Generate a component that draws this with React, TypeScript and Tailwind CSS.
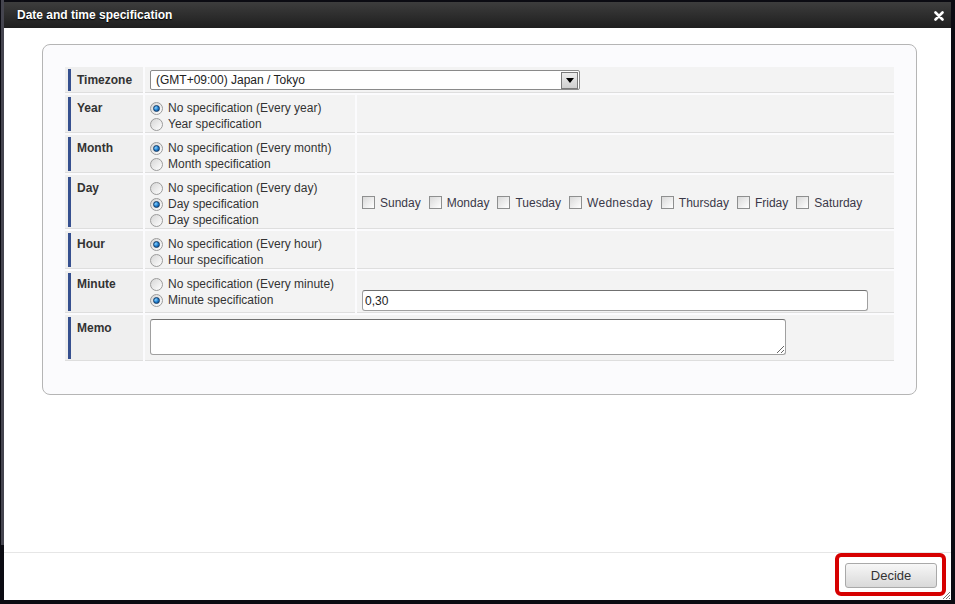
import React from 'react';

// ─── Small form primitives drawn to look like the classic browser widgets ────

const Radio: React.FC<{ checked?: boolean }> = ({ checked }) => (
  <span className="w-[13px] h-[13px] rounded-full border border-[#9b9b9b] bg-linear-to-br from-[#d6d6d6] to-white flex items-center justify-center shrink-0">
    {checked && (
      <span className="w-[7px] h-[7px] rounded-full bg-radial-[at_35%_35%] from-[#8fd4ff] via-[#1e7fd0] to-[#0b3e7a] border border-[#123a66]" />
    )}
  </span>
);

const Check: React.FC = () => (
  <span className="w-[13px] h-[13px] border border-[#8e8f8f] bg-linear-to-br from-[#d9d9d9] to-white shrink-0" />
);

const RadioLine: React.FC<{ label: string; checked?: boolean }> = ({ label, checked }) => (
  <div className="flex items-center h-[16px] gap-[5px]">
    <Radio checked={checked} />
    <span>{label}</span>
  </div>
);

const Label: React.FC<{ text: string }> = ({ text }) => (
  <div className="bg-[#efefef] border-b border-[#dedede] pt-[2px] pb-[1px] pl-[3px]">
    <div className="h-full border-l-[3px] border-[#36508f] pl-[6px] pt-[3px] leading-[16px] font-bold text-[#333]">
      {text}
    </div>
  </div>
);

const Cell: React.FC<{ className?: string; children?: React.ReactNode }> = ({ className = '', children }) => (
  <div className={`bg-[#f3f3f3] border-b border-[#dedede] ${className}`}>{children}</div>
);

// Wednesday renders a little wider in the original
const DAYS: { name: string; cls: string }[] = [
  { name: 'Sunday', cls: '' },
  { name: 'Monday', cls: '' },
  { name: 'Tuesday', cls: '' },
  { name: 'Wednesday', cls: 'tracking-[0.3px]' },
  { name: 'Thursday', cls: '' },
  { name: 'Friday', cls: '' },
  { name: 'Saturday', cls: '' },
];

export default function App() {
  return (
    <div className="w-[955px] h-[604px] bg-[#0b0b12] flex overflow-hidden font-['Liberation_Sans',Arial,sans-serif] text-[12px] text-[#333]">
      {/* left edge of the page behind */}
      <div className="w-[4px] pl-[1px] shrink-0">
        <div className="h-[545px] bg-[#45454f]" />
      </div>

      {/* Dialog */}
      <div className="w-[947px] mt-[2px] mb-[4px] flex flex-col">
        {/* Title bar */}
        <div className="h-[26px] shrink-0 bg-linear-to-b from-[#3d3d3d] to-[#1f1f1f] flex items-center justify-between pl-[13px] pr-[7px]">
          <span className="text-white font-bold text-[12px] [text-shadow:0_1px_1px_#000]">Date and time specification</span>
          <svg width="10" height="10" viewBox="0 0 10 10" className="mt-[1px]">
            <path d="M1.5 1.5 L8.5 8.5 M8.5 1.5 L1.5 8.5" stroke="#fff" strokeWidth="2.6" strokeLinecap="round" />
          </svg>
        </div>

        {/* Body */}
        <div className="h-[524px] shrink-0 bg-white pt-[16px] pl-[38px]">
          <div className="w-[875px] border border-[#b5b5b5] rounded-[8px] bg-[#fbfbfd] pt-[22px] pl-[22px] pb-[33px]">
            <div className="w-[829px] grid grid-cols-[78px_210px_537px] gap-x-[2px] gap-y-[2px] grid-rows-[26px_38px_38px_54px_38px_42px_46px]">
              {/* Timezone */}
              <Label text="Timezone" />
              <Cell className="col-span-2 pl-[5px] pt-[3px]">
                <div className="w-[430px] h-[20px] border border-[#8a8a8a] rounded-[2px] bg-white flex items-center justify-between">
                  <span className="pl-[5px] text-[#222]">(GMT+09:00) Japan / Tokyo</span>
                  <span className="w-[17px] h-[17px] mr-[1px] border border-[#7a7a7a] bg-linear-to-b from-[#ececec] to-[#cfcfcf] flex items-center justify-center">
                    <svg width="8" height="5" viewBox="0 0 8 5">
                      <path d="M0 0 H8 L4 5 Z" fill="#000" />
                    </svg>
                  </span>
                </div>
              </Cell>

              {/* Year */}
              <Label text="Year" />
              <Cell className="pl-[5px] pt-[5px]">
                <RadioLine label="No specification (Every year)" checked />
                <RadioLine label="Year specification" />
              </Cell>
              <Cell />

              {/* Month */}
              <Label text="Month" />
              <Cell className="pl-[5px] pt-[5px]">
                <RadioLine label="No specification (Every month)" checked />
                <RadioLine label="Month specification" />
              </Cell>
              <Cell />

              {/* Day */}
              <Label text="Day" />
              <Cell className="pl-[5px] pt-[5px]">
                <RadioLine label="No specification (Every day)" />
                <RadioLine label="Day specification" checked />
                <RadioLine label="Day specification" />
              </Cell>
              <Cell className="pl-[5px] pt-[2px] flex items-center">
                {DAYS.map((d, i) => (
                  <div key={d.name} className={`flex items-center gap-[5px] ${i > 0 ? 'ml-[8px]' : ''}`}>
                    <Check />
                    <span className={`text-[#3a3848] ${d.cls}`}>{d.name}</span>
                  </div>
                ))}
              </Cell>

              {/* Hour */}
              <Label text="Hour" />
              <Cell className="pl-[5px] pt-[5px]">
                <RadioLine label="No specification (Every hour)" checked />
                <RadioLine label="Hour specification" />
              </Cell>
              <Cell />

              {/* Minute */}
              <Label text="Minute" />
              <Cell className="pl-[5px] pt-[5px]">
                <RadioLine label="No specification (Every minute)" />
                <RadioLine label="Minute specification" checked />
              </Cell>
              <Cell className="pl-[5px] pt-[19px]">
                <input
                  readOnly
                  defaultValue="0,30"
                  className="w-[506px] h-[21px] border border-[#a0a0a0] border-t-[#707070] rounded-[3px] bg-white px-[2px] text-[12px] text-[#222] outline-none font-['Liberation_Sans',Arial,sans-serif]"
                />
              </Cell>

              {/* Memo */}
              <Label text="Memo" />
              <Cell className="col-span-2 pl-[5px] pt-[4px]">
                <textarea
                  readOnly
                  className="block w-[636px] h-[36px] border border-[#a0a0a0] border-t-[#707070] rounded-[3px] bg-white outline-none resize"
                />
              </Cell>
            </div>
          </div>
        </div>

        {/* Footer */}
        <div className="relative flex-1 bg-white border-t border-[#e6e6e6] flex justify-end pt-[10px] pr-[14px]">
          <button className="w-[92px] h-[25px] rounded-[3px] border border-[#a9a9a9] bg-linear-to-b from-[#f7f7f7] to-[#d9d9d9] text-[13px] text-[#333] font-['Liberation_Sans',Arial,sans-serif]">
            Decide
          </button>
          {/* highlight annotation */}
          <div className="absolute left-[831px] top-[0px] w-[111px] h-[43px] border-[4px] border-[#d60000] rounded-[6px]" />
          {/* resize grip */}
          <svg width="7" height="7" viewBox="0 0 7 7" className="absolute right-[1px] bottom-[1px]">
            <path d="M7 0 L0 7 M7 3 L3 7 M7 6 L6 7" stroke="#777" strokeWidth="1" />
          </svg>
        </div>
      </div>
    </div>
  );
}
